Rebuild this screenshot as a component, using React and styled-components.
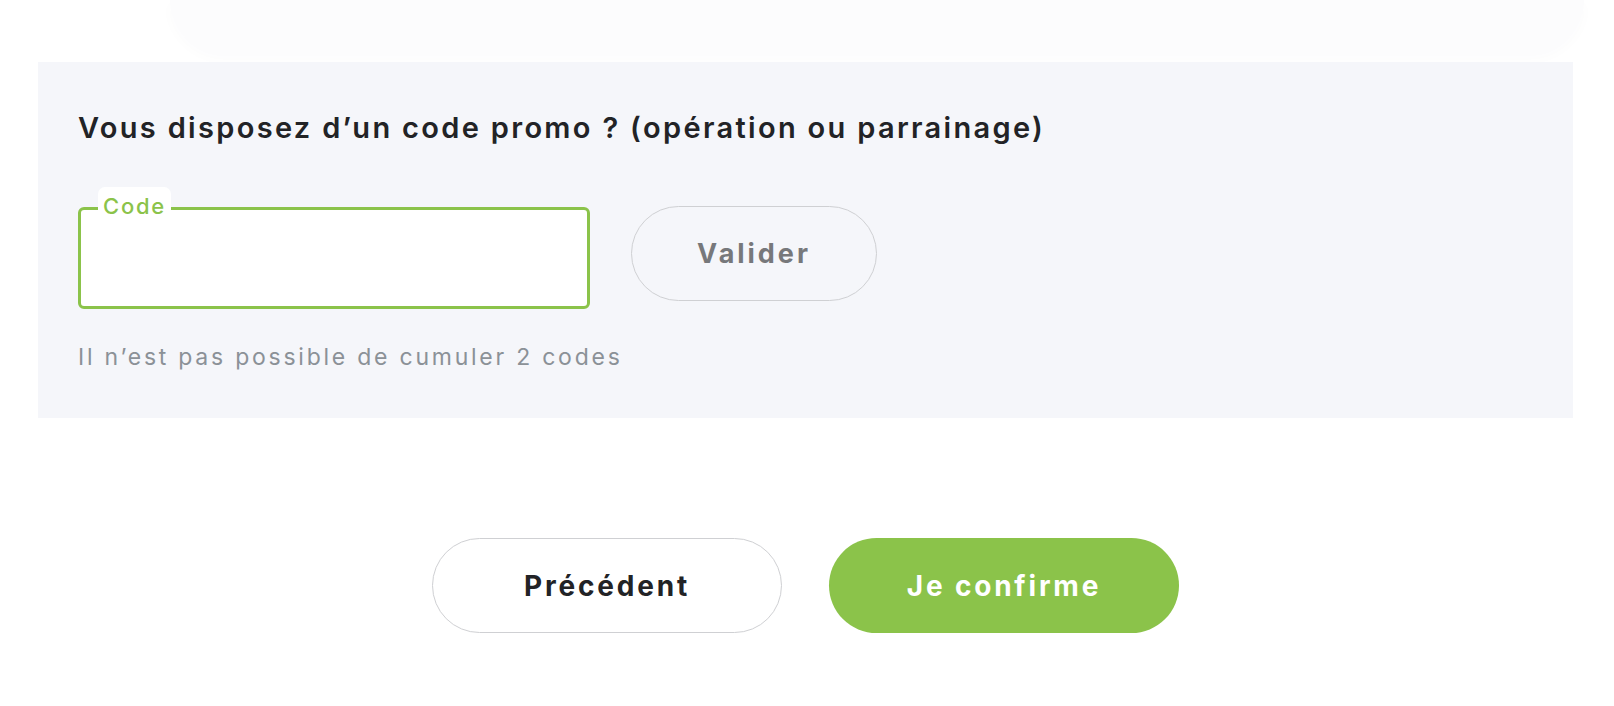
import React from "react";
import styled, { createGlobalStyle } from "styled-components";

const GlobalStyle = createGlobalStyle`
  body {
    margin: 0;
    background: #ffffff;
    font-family: Inter, "Liberation Sans", sans-serif;
  }
`;

const Page = styled.div`
  display: flex;
  flex-direction: column;
  padding-bottom: 70px;
`;

const TopCard = styled.div`
  height: 54px;
  margin-left: 170px;
  margin-right: 30px;
  border-radius: 0 0 60px 60px;
  background: #fcfcfd;
  box-shadow: 0 4px 14px rgba(30, 40, 80, 0.02);
`;

const Panel = styled.section`
  margin: 8px 0 0 38px;
  width: 1535px;
  box-sizing: border-box;
  background: #f5f6fa;
  padding: 48px 40px 46px;
`;

const Title = styled.h2`
  margin: 0;
  font-size: 29px;
  font-weight: 600;
  letter-spacing: 0.08em;
  color: #222326;
  line-height: 36px;
`;

const Row = styled.div`
  display: flex;
  align-items: flex-start;
  gap: 41px;
  margin-top: 61px;
`;

const Field = styled.div`
  position: relative;
  width: 512px;
  height: 102px;
  box-sizing: border-box;
  border: 3px solid #8bc34a;
  border-radius: 6px;
  background: #ffffff;
`;

const FieldLabel = styled.span`
  position: absolute;
  left: 17px;
  top: -23px;
  padding: 7px 5px 0;
  background: #ffffff;
  border-radius: 7px 7px 0 0;
  font-size: 22px;
  font-weight: 500;
  letter-spacing: 0.08em;
  line-height: 25px;
  color: #8bc34a;
`;

const Input = styled.input`
  width: 100%;
  height: 100%;
  box-sizing: border-box;
  border: none;
  outline: none;
  background: transparent;
  padding: 0 20px;
  font: inherit;
  font-size: 21px;
`;

const PillButton = styled.button`
  width: ${(p) => p.$w}px;
  height: ${(p) => p.$h}px;
  margin-top: ${(p) => p.$mt || 0}px;
  border-radius: 999px;
  border: ${(p) => (p.$primary ? "none" : "1.5px solid #cfd0d3")};
  background: ${(p) => (p.$primary ? "#8bc34a" : p.$bg || "transparent")};
  color: ${(p) => p.$color};
  font-family: Inter, "Liberation Sans", sans-serif;
  font-size: ${(p) => p.$size}px;
  font-weight: 700;
  letter-spacing: ${(p) => p.$ls}em;
  cursor: pointer;
`;

const Hint = styled.p`
  margin: 33px 0 0;
  font-size: 23px;
  font-weight: 400;
  letter-spacing: 0.12em;
  color: #8b9197;
  line-height: 30px;
`;

const Actions = styled.div`
  display: flex;
  justify-content: center;
  gap: 47px;
  margin: 120px 0 0 38px;
  width: 1535px;
`;

export default function App() {
  return (
    <>
      <GlobalStyle />
      <Page>
        <TopCard />
        <Panel>
          <Title>Vous disposez d’un code promo ? (opération ou parrainage)</Title>
          <Row>
            <Field>
              <FieldLabel>Code</FieldLabel>
              <Input />
            </Field>
            <PillButton $w={246} $h={95} $mt={-1} $color="#77787b" $size={27} $ls={0.11}>
              Valider
            </PillButton>
          </Row>
          <Hint>Il n’est pas possible de cumuler 2 codes</Hint>
        </Panel>
        <Actions>
          <PillButton $w={350} $h={95} $color="#222326" $size={28} $ls={0.1} $bg="#ffffff">
            Précédent
          </PillButton>
          <PillButton $w={350} $h={95} $color="#ffffff" $size={28} $ls={0.1} $primary>
            Je confirme
          </PillButton>
        </Actions>
      </Page>
    </>
  );
}
